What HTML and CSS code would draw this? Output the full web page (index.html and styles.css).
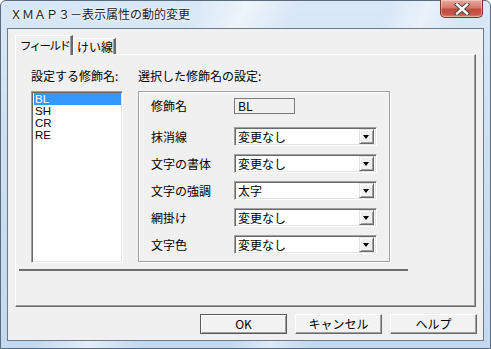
FILE: index.html
```html
<!DOCTYPE html>
<html lang="ja">
<head>
<meta charset="utf-8">
<link rel="stylesheet" href="styles.css">
</head>
<body>
<div class="window">
  <div class="titlebar">
    <span class="title">ＸＭＡＰ３－表示属性の動的変更</span>
    <div class="close">
      <svg width="16" height="12" viewBox="0 0 16 12">
        <path d="M3 1.5 L13 10.5 M13 1.5 L3 10.5" stroke="#4a4a4a" stroke-width="4.4" stroke-linecap="square"/>
        <path d="M3 1.5 L13 10.5 M13 1.5 L3 10.5" stroke="#ffffff" stroke-width="2.4" stroke-linecap="square"/>
      </svg>
    </div>
  </div>
  <div class="client">
    <div class="tabs">
      <div class="tab active">フィールド</div>
      <div class="tab">けい線</div>
    </div>
    <div class="panel">
      <div class="cols">
        <div class="leftcol">
          <div class="heading">設定する修飾名:</div>
          <ul class="listbox">
            <li class="sel">BL</li>
            <li>SH</li>
            <li>CR</li>
            <li>RE</li>
          </ul>
        </div>
        <div class="rightcol">
          <div class="heading">選択した修飾名の設定:</div>
          <div class="group">
            <div class="label first">修飾名</div>
            <div class="textbox">BL</div>
            <div class="label">抹消線</div>
            <div class="combo"><span>変更なし</span><span class="drop"></span></div>
            <div class="label">文字の書体</div>
            <div class="combo"><span>変更なし</span><span class="drop"></span></div>
            <div class="label">文字の強調</div>
            <div class="combo"><span>太字</span><span class="drop"></span></div>
            <div class="label">網掛け</div>
            <div class="combo"><span>変更なし</span><span class="drop"></span></div>
            <div class="label">文字色</div>
            <div class="combo"><span>変更なし</span><span class="drop"></span></div>
          </div>
        </div>
      </div>
      <div class="separator"></div>
    </div>
    <div class="buttons">
      <div class="btn default">OK</div>
      <div class="btn">キャンセル</div>
      <div class="btn">ヘルプ</div>
    </div>
  </div>
</div>
</body>
</html>
```
FILE: styles.css
```css
* { box-sizing: border-box; }
html, body { margin: 0; padding: 0; background: #ffffff; }
body {
  font-family: "Noto Sans CJK JP", "Liberation Sans", sans-serif;
  font-size: 12px;
  color: #000;
}
.window {
  width: 491px;
  height: 349px;
  border: 1px solid #5a6b7c;
  border-radius: 6px 6px 0 0;
  padding: 0 6px 7px 6px;
  background:
    linear-gradient(115deg, rgba(255,255,255,0) 30%, rgba(255,255,255,0.55) 38%, rgba(255,255,255,0) 46%, rgba(255,255,255,0) 60%, rgba(255,255,255,0.45) 66%, rgba(255,255,255,0) 72%),
    linear-gradient(to bottom, #d9e8f6 0%, #cde0f3 40%, #c3d9ef 100%);
  display: flex;
  flex-direction: column;
}
.titlebar {
  height: 27px;
  display: flex;
  justify-content: space-between;
  align-items: flex-start;
}
.title {
  padding: 5px 0 0 3px;
  line-height: 16px;
  font-size: 12px;
  color: #1a1a1a;
  text-shadow: 0 0 4px #ffffff, 0 0 2px #ffffff;
}
.close {
  width: 43px;
  height: 18px;
  margin-top: -1px;
  margin-right: 1px;
  border: 1px solid #7a3030;
  border-top: none;
  border-radius: 0 0 5px 5px;
  background: linear-gradient(to bottom, #e9a99d 0%, #d67a6c 45%, #c24a3c 55%, #c9584a 85%, #e08a7a 100%);
  display: flex;
  align-items: center;
  justify-content: center;
  box-shadow: inset 0 0 0 1px rgba(255,255,255,0.35);
}
.client {
  width: 477px;
  height: 313px;
  border: 1px solid #6d7b89;
  background: #f0f0f0;
  padding: 6px 7px 6px 7px;
  display: flex;
  flex-direction: column;
}
.tabs {
  display: flex;
  align-items: flex-end;
  height: 19px;
  position: relative;
  z-index: 1;
}
.tab {
  height: 16px;
  line-height: 15px;
  padding: 0 0 0 3px;
  border-top: 1px solid #ffffff;
  border-left: 1px solid #ffffff;
  border-right: 2px solid #696969;
  box-shadow: inset -1px 0 #a0a0a0;
  background: #f0f0f0;
  width: 43px;
  white-space: nowrap;
  overflow: hidden;
}
.tab.active {
  height: 20px;
  width: 58px;
  line-height: 19px;
  padding: 0 0 0 4px;
  margin-bottom: -1px;
  font-size: 11.5px;
  letter-spacing: -1.6px;
}
.panel {
  height: 253px;
  border-top: 1px solid #ffffff;
  border-left: 1px solid #ffffff;
  border-right: 1px solid #696969;
  border-bottom: 1px solid #696969;
  box-shadow: inset -1px -1px #a0a0a0;
  padding: 14px 0 0 15px;
}
.cols {
  display: flex;
  gap: 15px;
}
.leftcol { width: 92px; }
.heading {
  line-height: 14px;
  height: 14px;
  margin-bottom: 8px;
  white-space: nowrap;
}
.listbox {
  list-style: none;
  margin: 0;
  padding: 0;
  width: 92px;
  height: 172px;
  background: #ffffff;
  border-top: 1px solid #a0a0a0;
  border-left: 1px solid #a0a0a0;
  border-right: 1px solid #ffffff;
  border-bottom: 1px solid #ffffff;
  box-shadow: inset 1px 1px #696969, inset -1px -1px #e3e3e3;
  padding: 1px 1px 0 2px;
}
.listbox li {
  height: 12px;
  line-height: 12px;
  padding-left: 1px;
  font-family: "Liberation Sans", sans-serif;
  font-size: 11.5px;
  overflow: hidden;
}
.listbox li.sel {
  background: #3399ff;
  color: #ffffff;
}
.group {
  width: 252px;
  height: 171px;
  border: 1px solid #a0a0a0;
  box-shadow: inset 1px 1px #ffffff, 1px 1px #ffffff;
  padding: 6px 0 0 12px;
  display: grid;
  grid-template-columns: 83px auto;
  grid-template-rows: 21px 19px 19px 19px 19px 19px;
  row-gap: 8px;
  align-items: center;
  justify-items: start;
}
.label { line-height: 14px; white-space: nowrap; }
.label.first { align-self: start; line-height: 16px; }
.textbox {
  align-self: start;
  width: 61px;
  height: 16px;
  border: 1px solid #7a7a7a;
  background: #f0f0f0;
  line-height: 14px;
  padding-left: 3px;
}
.combo {
  width: 143px;
  height: 19px;
  background: #ffffff;
  border-top: 1px solid #a0a0a0;
  border-left: 1px solid #a0a0a0;
  border-right: 1px solid #ffffff;
  border-bottom: 1px solid #ffffff;
  box-shadow: inset 1px 1px #696969, inset -1px -1px #e3e3e3;
  display: flex;
  align-items: center;
  justify-content: space-between;
  padding: 0 2px 0 2px;
  line-height: 14px;
}
.combo span:first-child { padding-left: 1px; }
.drop {
  width: 15px;
  height: 15px;
  background: #f0f0f0;
  border-top: 1px solid #e3e3e3;
  border-left: 1px solid #e3e3e3;
  border-right: 1px solid #696969;
  border-bottom: 1px solid #696969;
  box-shadow: inset 1px 1px #ffffff, inset -1px -1px #a0a0a0;
  position: relative;
}
.drop::after {
  content: "";
  position: absolute;
  left: 3px;
  top: 5px;
  border-left: 3.5px solid transparent;
  border-right: 3.5px solid transparent;
  border-top: 4px solid #000;
}
.separator {
  margin: 6px 0 0 -12px;
  width: 389px;
  height: 2px;
  background: #6e6e6e;
}
.buttons {
  display: flex;
  justify-content: flex-end;
  gap: 8px;
  margin-top: 7px;
  margin-right: -1px;
}
.btn {
  width: 87px;
  height: 20px;
  line-height: 18px;
  text-align: center;
  background: #f2f2f2;
  border-top: 1px solid #ffffff;
  border-left: 1px solid #ffffff;
  border-right: 1px solid #696969;
  border-bottom: 1px solid #696969;
  box-shadow: inset -1px -1px #a0a0a0;
}
.btn.default {
  border: 1px solid #5a5a5a;
  box-shadow: inset 1px 1px #ffffff, inset -1px -1px #a0a0a0;
}
```
